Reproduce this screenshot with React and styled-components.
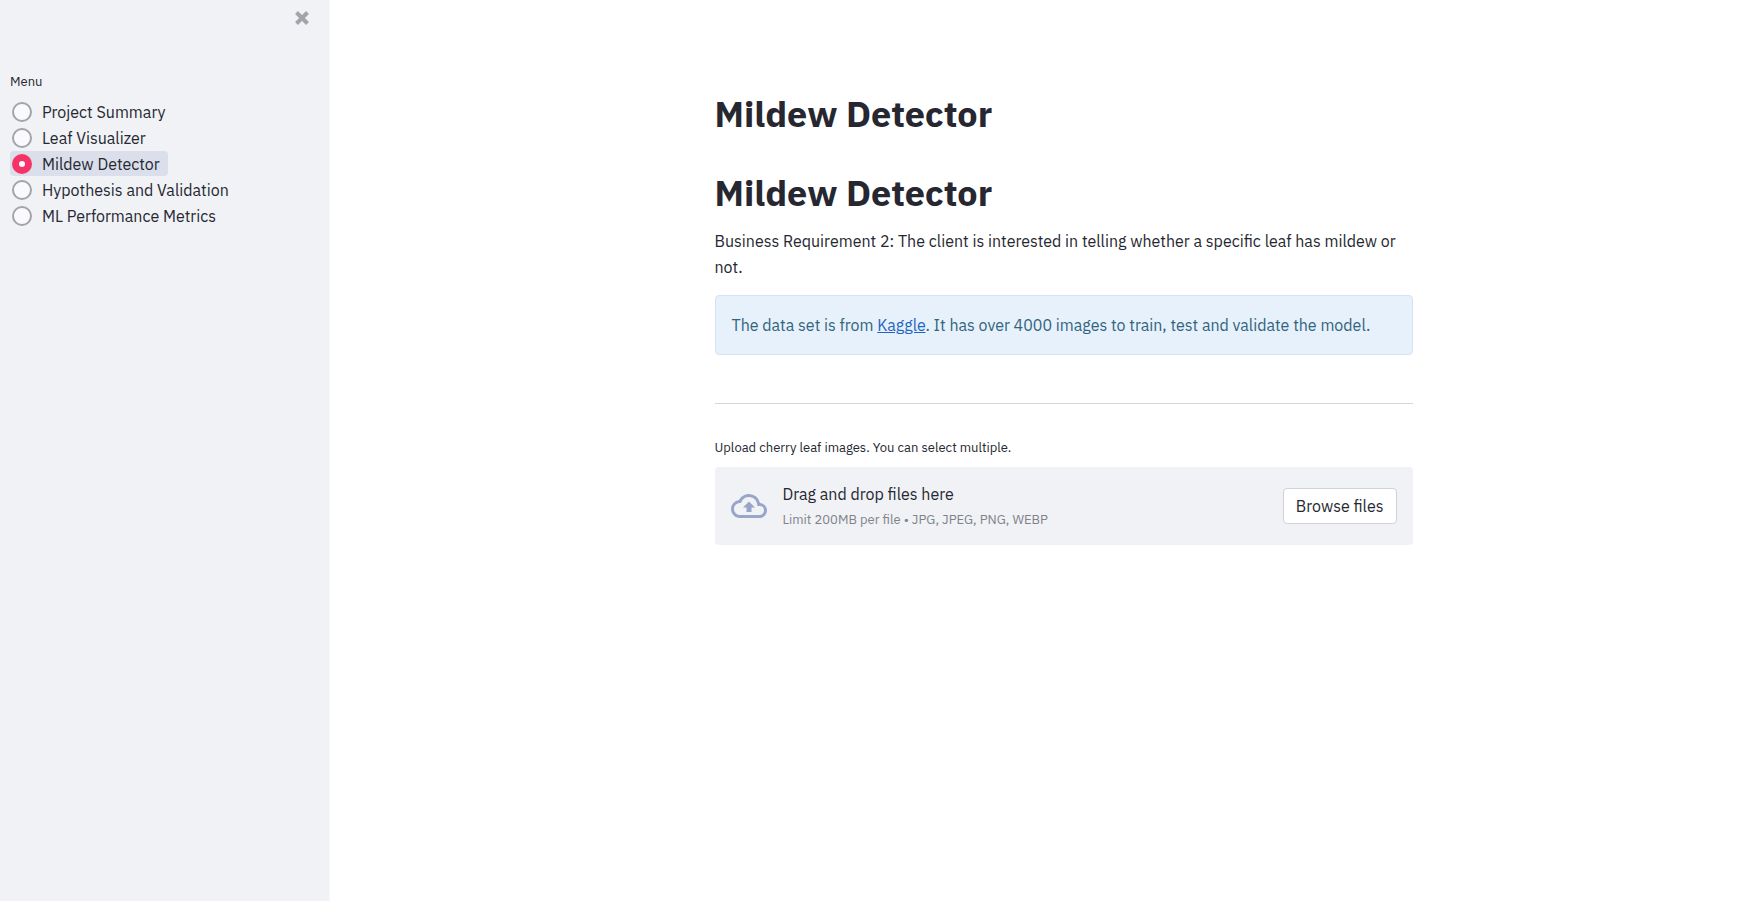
import React, { useState } from "react";
import styled, { createGlobalStyle } from "styled-components";

const GlobalStyle = createGlobalStyle`
  *, *::before, *::after { box-sizing: border-box; }
  body {
    margin: 0;
    background: #ffffff;
    color: #262730;
    font: 400 16px/26px "IBM Plex Sans", Roboto, "Liberation Sans", sans-serif;
  }
`;

const Page = styled.div`
  display: flex;
  min-height: 100vh;
`;

const Sidebar = styled.aside`
  flex: 0 0 330px;
  display: flex;
  flex-direction: column;
  background: #f0f2f6;
  border-right: 1px solid #f6f7fa;
`;

const SidebarHeader = styled.div`
  display: flex;
  justify-content: flex-end;
  padding: 8px 17px 0 0;
  height: 72px;
`;

const CloseButton = styled.button`
  display: flex;
  align-items: center;
  justify-content: center;
  width: 20px;
  height: 20px;
  padding: 0;
  border: 0;
  background: transparent;
  color: #a3a4a9;
  cursor: pointer;
`;

const Menu = styled.fieldset`
  display: flex;
  flex-direction: column;
  align-items: flex-start;
  gap: 1px;
  min-width: 0;
  margin: 0;
  padding: 0 10px;
  border: 0;
`;

const MenuTitle = styled.legend`
  padding: 0 0 7px;
  font-size: 13px;
  line-height: 20px;
`;

const MenuItem = styled.label`
  display: flex;
  align-items: center;
  gap: 10px;
  height: 25px;
  padding: 0 8px 0 2px;
  border-radius: 4px;
  background: ${({ $active }) => ($active ? "#dadfeb" : "transparent")};
  cursor: pointer;
`;

const Radio = styled.input`
  appearance: none;
  flex: none;
  width: 20px;
  height: 20px;
  margin: 0;
  border: 2px solid #a3a4a9;
  border-radius: 50%;
  background: #fafafc;
  cursor: pointer;

  &:checked {
    border: 7px solid #f63366;
  }
`;

const Main = styled.main`
  flex: 1;
  display: flex;
  justify-content: center;
  padding: 80px 0 80px 52px;
`;

const Column = styled.div`
  display: flex;
  flex-direction: column;
  width: 100%;
  max-width: 730px;
  padding: 0 16px;
`;

const Title = styled.h1`
  margin: 0;
  padding: 12px 0 13px;
  color: #262730;
  font: 700 36px/44px "IBM Plex Sans", "Noto Sans", sans-serif;

  & + & {
    margin-top: 10px;
  }
`;

const Lead = styled.p`
  margin: 0 0 15px;
`;

const Notice = styled.div`
  padding: 16px;
  border: 1px solid #d5e4f1;
  border-radius: 4px;
  background: #e7f1fc;
  color: #31647d;

  a {
    color: #1f66c1;
  }
`;

const Divider = styled.hr`
  width: 100%;
  height: 1px;
  margin: 48px 0 34px;
  border: 0;
  background: #d3d6dc;
`;

const UploadLabel = styled.label`
  margin-bottom: 9px;
  font-size: 13px;
  line-height: 20px;
`;

const Dropzone = styled.section`
  display: flex;
  align-items: center;
  gap: 16px;
  padding: 15px 16px;
  border-radius: 4px;
  background: #f0f2f6;
`;

const CloudIcon = styled.svg`
  flex: none;
  width: 36px;
  height: 36px;
  fill: #98a4ca;
`;

const DropText = styled.div`
  flex: 1;
  display: flex;
  flex-direction: column;
  gap: 4px;
  line-height: 24px;
`;

const Limit = styled.small`
  color: #808289;
  font-size: 13px;
  line-height: 20px;
`;

const BrowseButton = styled.button`
  padding: 4px 12px;
  border: 1px solid #d0d2d8;
  border-radius: 4px;
  background: #ffffff;
  color: inherit;
  font: inherit;
  cursor: pointer;
`;

const pages = [
  "Project Summary",
  "Leaf Visualizer",
  "Mildew Detector",
  "Hypothesis and Validation",
  "ML Performance Metrics",
];

export default function App() {
  const [page, setPage] = useState("Mildew Detector");
  const fileInput = React.useRef(null);

  return (
    <Page>
      <GlobalStyle />
      <Sidebar>
        <SidebarHeader>
          <CloseButton type="button" aria-label="Close sidebar">
            <svg width="16" height="16" viewBox="0 0 16 16" fill="none" stroke="currentColor" strokeWidth="4">
              <path d="M2.5 2.5 13.5 13.5M13.5 2.5 2.5 13.5" />
            </svg>
          </CloseButton>
        </SidebarHeader>
        <Menu>
          <MenuTitle>Menu</MenuTitle>
          {pages.map((name) => (
            <MenuItem key={name} $active={name === page}>
              <Radio type="radio" name="page" checked={name === page} onChange={() => setPage(name)} />
              {name}
            </MenuItem>
          ))}
        </Menu>
      </Sidebar>
      <Main>
        <Column>
          <Title>Mildew Detector</Title>
          <Title as="h2">Mildew Detector</Title>
          <Lead>
            Business Requirement 2: The client is interested in telling whether a specific leaf has mildew or not.
          </Lead>
          <Notice>
            The data set is from <a href="#kaggle">Kaggle</a>. It has over 4000 images to train, test and validate
            the model.
          </Notice>
          <Divider />
          <UploadLabel htmlFor="leaf-images">Upload cherry leaf images. You can select multiple.</UploadLabel>
          <Dropzone>
            <CloudIcon viewBox="0 0 24 24" aria-hidden="true">
              <path d="M19.35 10.04A7.49 7.49 0 0 0 12 4C9.11 4 6.6 5.64 5.35 8.04A5.994 5.994 0 0 0 0 14c0 3.31 2.69 6 6 6h13c2.76 0 5-2.24 5-5 0-2.64-2.05-4.78-4.65-4.96zM19 18H6c-2.21 0-4-1.79-4-4 0-2.05 1.53-3.76 3.56-3.97l1.07-.11.5-.95A5.469 5.469 0 0 1 12 6c2.62 0 4.88 1.86 5.39 4.43l.3 1.5 1.53.11A2.98 2.98 0 0 1 22 15c0 1.65-1.35 3-3 3zM8 13h2.35v3h3.3v-3H16l-4-4z" />
            </CloudIcon>
            <DropText>
              <span>Drag and drop files here</span>
              <Limit>Limit 200MB per file • JPG, JPEG, PNG, WEBP</Limit>
            </DropText>
            <BrowseButton type="button" onClick={() => fileInput.current.click()}>
              Browse files
            </BrowseButton>
            <input ref={fileInput} id="leaf-images" type="file" accept=".jpg,.jpeg,.png,.webp" multiple hidden />
          </Dropzone>
        </Column>
      </Main>
    </Page>
  );
}
